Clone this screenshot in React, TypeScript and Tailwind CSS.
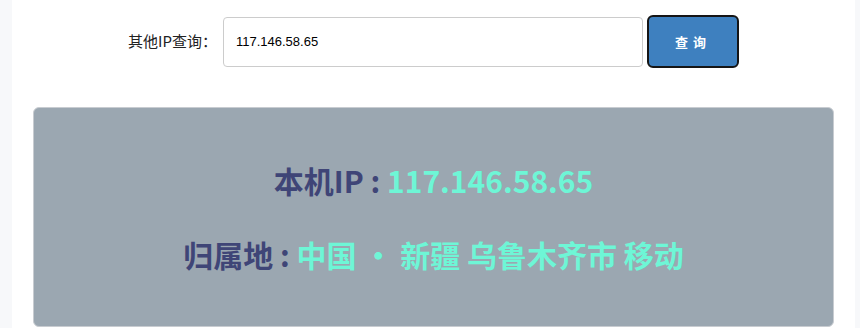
export default function App() {
  return (
    <div
      className="flex h-[328px] w-[860px] bg-[#f7f8fa]"
      style={{ fontFamily: '"Liberation Sans", Arial, "Noto Sans CJK SC", sans-serif' }}
    >
      <div className="ml-[12px] mr-[5px] flex-1 bg-white px-[21px] pt-[15px]">
        <div className="flex items-center justify-center">
          <label className="mr-[6px] text-[15px] text-[#222]" style={{ fontFamily: '"Noto Sans CJK SC", sans-serif' }}>
            其他IP查询：
          </label>
          <input
            className="h-[50px] w-[420px] rounded-[4px] border border-[#ccc] px-[12px] text-[13px] text-black outline-none"
            defaultValue="117.146.58.65"
          />
          <button className="ml-[4px] h-[53px] w-[92px] rounded-[6px] border-2 border-[#151515] bg-[#3e80bf] text-[13px] font-bold tracking-[5px] text-white" style={{ fontFamily: '"Noto Sans CJK SC", sans-serif' }}>
            查询
          </button>
        </div>
        <div
          className="mt-[39px] flex h-[220px] flex-col items-center rounded-[6px] border border-[#c8ccd1] bg-[#9ba7b1] pt-[50px] text-[30px] font-bold leading-[45px]"
          style={{ fontFamily: '"Noto Sans CJK SC", sans-serif' }}
        >
          <p>
            <span className="text-[#3f4577]">本机IP : </span>
            <span className="text-[#6ef6d6]">117.146.58.65</span>
          </p>
          <p className="mt-[29px]">
            <span className="text-[#3f4577]">归属地 : </span>
            <span className="text-[#6ef6d6]">中国 ・ 新疆 乌鲁木齐市 移动</span>
          </p>
        </div>
      </div>
    </div>
  );
}
